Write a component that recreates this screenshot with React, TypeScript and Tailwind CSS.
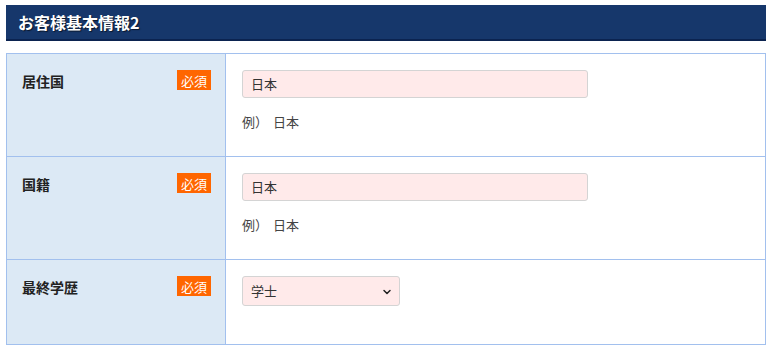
import { ChevronDown } from 'lucide-react';

const font = { fontFamily: '"Noto Sans CJK JP", "Noto Sans", sans-serif' };

function Badge() {
  return (
    <span className="flex h-[20px] w-[34px] items-center justify-center bg-[#ff6600] text-[13px] leading-none text-white">
      必須
    </span>
  );
}

function Label({ text }: { text: string }) {
  return (
    <div className="flex w-[219px] shrink-0 items-start justify-between border-r border-[#a2c0ee] bg-[#dce9f5] pl-[15px] pr-[14px] pt-[16px]">
      <span className="mt-[1px] text-[14px] font-bold leading-[20px] text-[#222]">{text}</span>
      <Badge />
    </div>
  );
}

function TextRow({ label, value, example }: { label: string; value: string; example: string }) {
  return (
    <div className="flex h-[103px] border-b border-[#a2c0ee]">
      <Label text={label} />
      <div className="flex-1 pl-[16px] pt-[16px]">
        <div className="flex h-[28px] w-[346px] items-center rounded-[3px] border border-[#d4d4d4] bg-[#ffeaea] pl-[8px] text-[13px] text-[#333]">
          {value}
        </div>
        <div className="mt-[14px] flex h-[20px] items-center text-[13px] text-[#444]">
          <span>例）</span>
          <span className="ml-[5px]">{example}</span>
        </div>
      </div>
    </div>
  );
}

export default function App() {
  return (
    <div className="min-h-[352px] bg-white px-[6px] pt-[5px]" style={font}>
      <div className="flex h-[36px] items-center border-b-2 border-[#0b2350] bg-[#16376b] pl-[12px]">
        <h2
          className="text-[16px] font-bold text-white"
          style={{ textShadow: '1px 1px 1px rgba(0,0,0,0.6)' }}
        >
          お客様基本情報2
        </h2>
      </div>

      <div className="mt-[12px] border border-[#a2c0ee]">
        <TextRow label="居住国" value="日本" example="日本" />
        <TextRow label="国籍" value="日本" example="日本" />
        <div className="flex h-[84px]">
          <Label text="最終学歴" />
          <div className="flex-1 pl-[16px] pt-[16px]">
            <div className="relative flex h-[30px] w-[158px] items-center rounded-[3px] border border-[#d4d4d4] bg-[#ffeaea] pl-[8px] text-[13px] text-[#333]">
              学士
              <ChevronDown className="absolute right-[6px] top-[9px] h-[12px] w-[12px] text-[#222]" strokeWidth={3} />
            </div>
          </div>
        </div>
      </div>
    </div>
  );
}
